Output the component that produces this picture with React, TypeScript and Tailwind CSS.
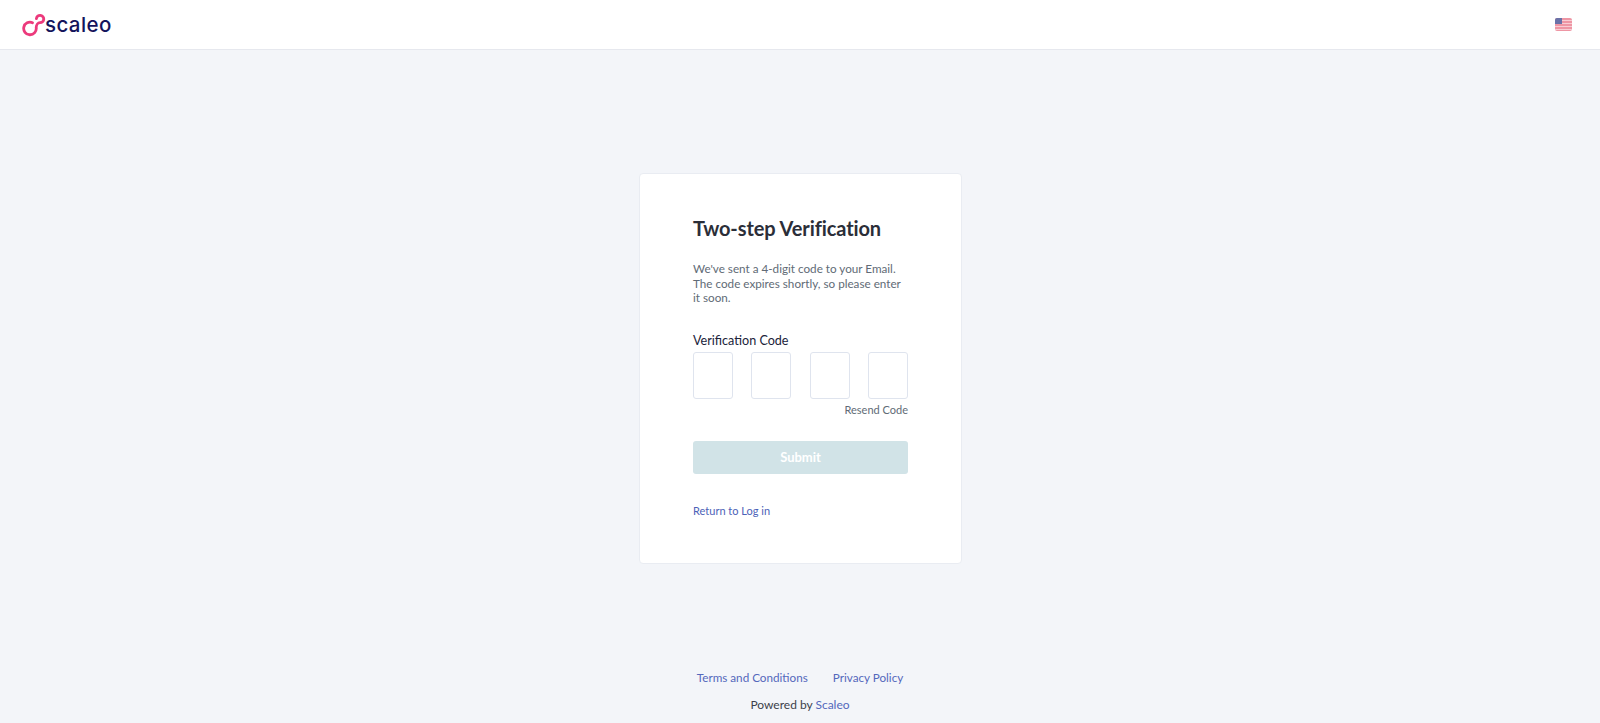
import React from 'react';

const FONT = { fontFamily: 'Lato, "Open Sans", sans-serif' };

function Logo() {
  return (
    <div className="flex items-center pt-[1px]">
      {/* Infinity-like ring mark */}
      <svg width="24" height="24" viewBox="0 0 24 24" fill="none" className="ml-[22px]">
        <path
          d="M10.5 9.7A6.3 6.3 0 1 0 14.2 14.5C14.3 12 16 9.7 18 9.7A3.7 3.7 0 1 0 14.4 5.6"
          stroke="#ec3a7c"
          strokeWidth="2.8"
          strokeLinecap="round"
        />
      </svg>
      <span
        className="ml-[-1px] text-[20.5px] leading-none tracking-[0.4px] text-[#14145c]"
        style={{ fontFamily: 'Inter, sans-serif', fontWeight: 500 }}
      >
        scaleo
      </span>
    </div>
  );
}

function Flag() {
  return (
    <svg width="17" height="13" viewBox="0 0 17 13" className="rounded-[2px]">
      <rect width="17" height="13" fill="#ee96a4" />
      <rect y="2" width="17" height="1" fill="#f8cdd3" />
      <rect y="5" width="17" height="1" fill="#f8cdd3" />
      <rect y="8" width="17" height="1" fill="#f8cdd3" />
      <rect y="11" width="17" height="1" fill="#f8cdd3" />
      <rect width="7" height="6" fill="#6a72a8" />
    </svg>
  );
}

export default function App() {
  return (
    <div className="flex h-[723px] flex-col overflow-hidden bg-[#f3f5f9]" style={FONT}>
      <header className="flex h-[50px] shrink-0 items-center justify-between border-b border-[#e6e8ee] bg-white pr-[28px]">
        <Logo />
        <Flag />
      </header>

      <main className="flex flex-1 justify-center pl-px pt-[123px]">
        <div className="h-[391px] w-[323px] rounded border border-[#e9ecf2] bg-white px-[53px] pt-[42px]">
          <h1 className="text-[20px] font-bold leading-[24px] tracking-[-0.1px] text-[#2b2e38]">Two-step Verification</h1>
          <p className="mt-[21px] text-[11.7px] leading-[14.5px] text-[#616b76]">
            We've sent a 4-digit code to your Email.
            <br />
            The code expires shortly, so please enter
            <br />
            it soon.
          </p>
          <label className="mt-[28px] block text-[12.6px] leading-[16px] text-[#20233a]">Verification Code</label>
          <div className="mt-[3px] flex justify-between">
            <div className="h-[47px] w-[40px] rounded-[3px] border border-[#dfe4ee] bg-white" />
            <div className="h-[47px] w-[40px] rounded-[3px] border border-[#dfe4ee] bg-white" />
            <div className="h-[47px] w-[40px] rounded-[3px] border border-[#dfe4ee] bg-white" />
            <div className="h-[47px] w-[40px] rounded-[3px] border border-[#dfe4ee] bg-white" />
          </div>
          <div className="mt-[4px] text-right text-[11px] leading-[14px] text-[#616b76]">Resend Code</div>
          <button className="mt-[24px] h-[33px] w-full rounded-[3px] bg-[#d1e3e7] pt-[2px] text-[13px] font-bold text-white">
            Submit
          </button>
          <a className="mt-[30px] block text-[11px] leading-[14px] text-[#4c62b8]">Return to Log in</a>
        </div>
      </main>

      <footer className="flex shrink-0 flex-col items-center pb-[11px] text-[12px] leading-[15px]">
        <div className="flex gap-[25px] text-[11.7px] text-[#5468bc]">
          <a>Terms and Conditions</a>
          <a>Privacy Policy</a>
        </div>
        <div className="mt-[12px] text-[#3c3f4a]">
          Powered by <a className="text-[#5468bc]">Scaleo</a>
        </div>
      </footer>
    </div>
  );
}
